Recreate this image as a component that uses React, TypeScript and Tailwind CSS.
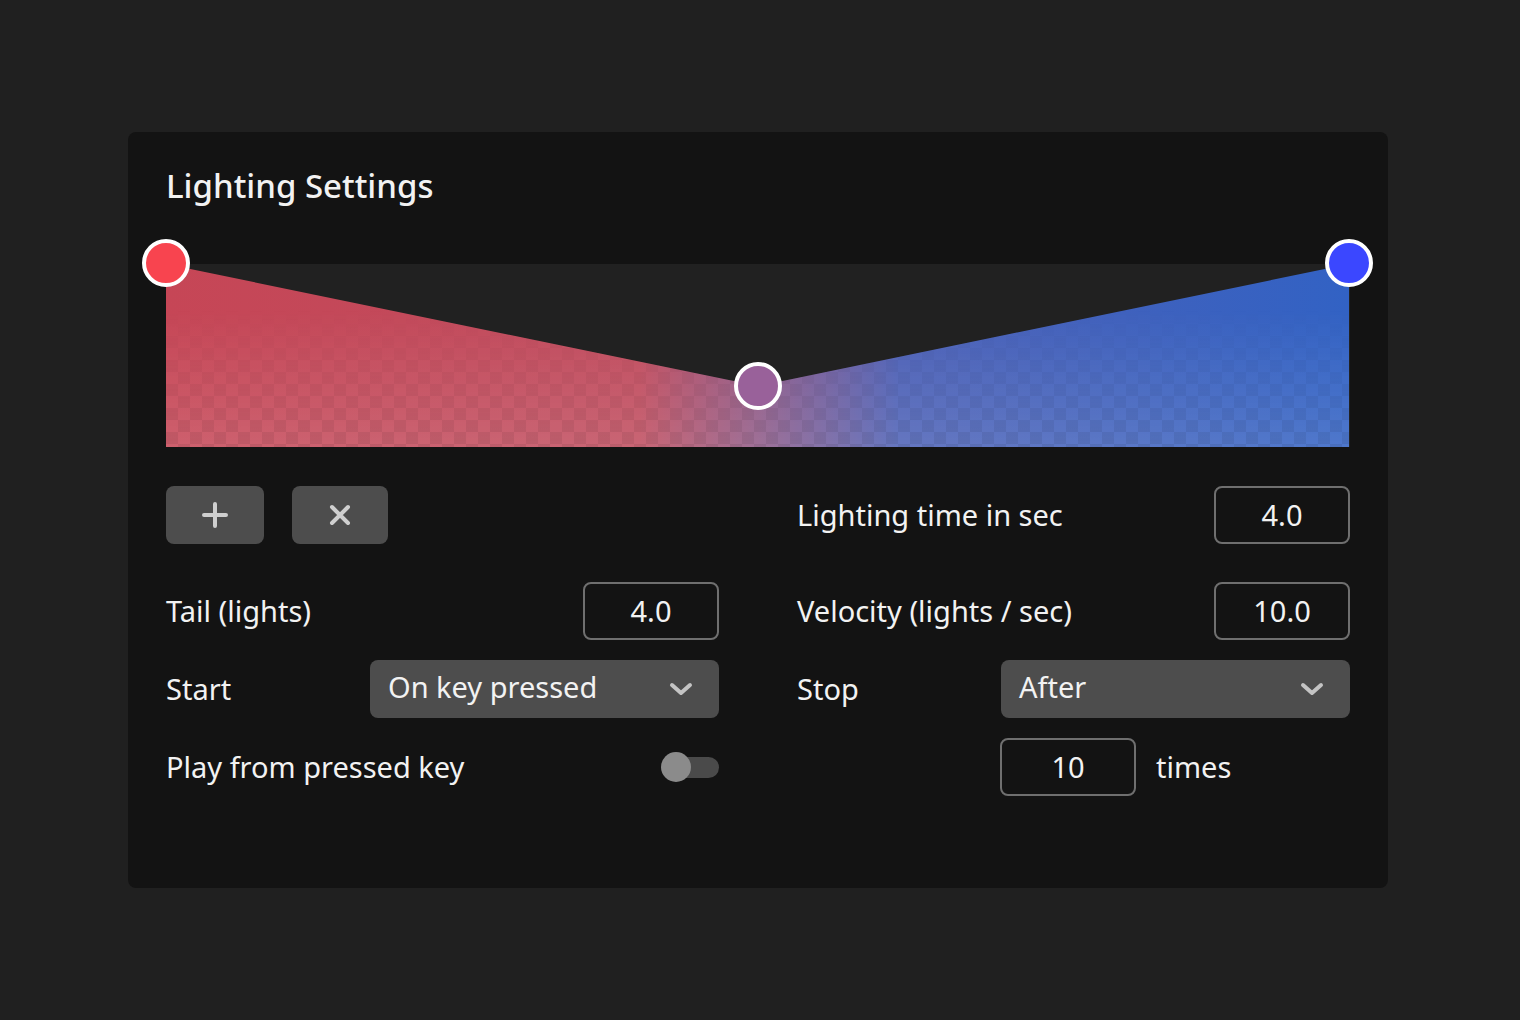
import React from 'react'

const font = { fontFamily: '"Noto Sans", "Open Sans", sans-serif' }

function Chevron() {
  return (
    <svg width="24" height="16" viewBox="0 0 24 16" fill="none">
      <path d="M3 4l9 8 9-8" stroke="#c4c4c4" strokeWidth="4" strokeLinecap="round" strokeLinejoin="round" />
    </svg>
  )
}

function NumberBox({ value }: { value: string }) {
  return (
    <div className="w-[136px] h-[58px] border-2 border-[#6f6f6f] rounded-[8px] flex items-center justify-center text-[29px] text-[#f2f2f2]">
      {value}
    </div>
  )
}

function Select({ value }: { value: string }) {
  return (
    <div className="w-[349px] h-[58px] bg-[#4d4d4d] rounded-[8px] flex items-center justify-between pl-[18px] pr-[26px] text-[29px] text-[#f2f2f2]">
      <span className="-mt-[4px]">{value}</span>
      <Chevron />
    </div>
  )
}

function Graph() {
  const w = 1183
  const h = 183
  return (
    <div className="relative h-[183px] bg-[#212121]">
      <svg width={w} height={h} viewBox={`0 0 ${w} ${h}`} className="block">
        <defs>
          <linearGradient id="hue" x1="0" y1="0" x2="1" y2="0">
            <stop offset="0%" stopColor="#c64656" />
            <stop offset="40%" stopColor="#c04c5e" />
            <stop offset="50%" stopColor="#8f5986" />
            <stop offset="62%" stopColor="#4c60b6" />
            <stop offset="100%" stopColor="#3262c4" />
          </linearGradient>
          <linearGradient id="fade" x1="0" y1="0" x2="0" y2="1">
            <stop offset="25%" stopColor="#000" />
            <stop offset="100%" stopColor="#fff" />
          </linearGradient>
          <pattern id="checker" width="24" height="24" patternUnits="userSpaceOnUse">
            <rect width="24" height="24" fill="#ffffff" fillOpacity="0.14" />
            <rect width="12" height="12" fill="#000000" fillOpacity="0.07" />
            <rect x="12" y="12" width="12" height="12" fill="#000000" fillOpacity="0.07" />
          </pattern>
          <mask id="fademask">
            <rect width={w} height={h} fill="url(#fade)" />
          </mask>
        </defs>
        <polygon points={`0,0 592,122 ${w},0 ${w},${h} 0,${h}`} fill="url(#hue)" />
        <polygon points={`0,0 592,122 ${w},0 ${w},${h} 0,${h}`} fill="url(#checker)" mask="url(#fademask)" />
      </svg>
      <div className="absolute left-[-24px] top-[-25px] w-[48px] h-[48px] rounded-full bg-[#f8444f] border-[4px] border-white" />
      <div className="absolute left-[568px] top-[98px] w-[48px] h-[48px] rounded-full bg-[#99619a] border-[4px] border-white" />
      <div className="absolute left-[1159px] top-[-25px] w-[48px] h-[48px] rounded-full bg-[#3b47ff] border-[4px] border-white" />
    </div>
  )
}

export default function App() {
  return (
    <div className="min-h-screen bg-[#202020] pt-[132px] px-[128px]" style={font}>
      <div className="w-[1260px] h-[756px] bg-[#131313] rounded-[8px] px-[38px] pt-[30px] text-[#f2f2f2]">
        <h1 className="text-[33px] leading-[48px] font-medium mb-[54px]">Lighting Settings</h1>
        <Graph />
        <div className="grid grid-cols-2 gap-x-[78px] mt-[39px]">
          <div className="flex flex-col">
            <div className="flex gap-[28px] h-[58px]">
              <button className="w-[98px] h-[58px] bg-[#4d4d4d] rounded-[8px] flex items-center justify-center">
                <svg width="26" height="26" viewBox="0 0 26 26" fill="none">
                  <path d="M13 2v22M2 13h22" stroke="#cfcfcf" strokeWidth="4" strokeLinecap="round" />
                </svg>
              </button>
              <button className="w-[96px] h-[58px] bg-[#4d4d4d] rounded-[8px] flex items-center justify-center">
                <svg width="22" height="22" viewBox="0 0 22 22" fill="none">
                  <path d="M3 3l16 16M19 3L3 19" stroke="#cfcfcf" strokeWidth="4" strokeLinecap="round" />
                </svg>
              </button>
            </div>
            <div className="flex items-center justify-between h-[58px] mt-[38px]">
              <span className="text-[29px]">Tail (lights)</span>
              <NumberBox value="4.0" />
            </div>
            <div className="flex items-center justify-between h-[58px] mt-[20px]">
              <span className="text-[29px]">Start</span>
              <Select value="On key pressed" />
            </div>
            <div className="flex items-center justify-between h-[58px] mt-[20px]">
              <span className="text-[29px]">Play from pressed key</span>
              <div className="relative w-[58px] h-[30px] flex items-center">
                <div className="w-[58px] h-[21px] ml-[1px] rounded-full bg-[#4a4a4a]" />
                <div className="absolute left-0 top-0 w-[30px] h-[30px] rounded-full bg-[#8b8b8b]" />
              </div>
            </div>
          </div>
          <div className="flex flex-col">
            <div className="flex items-center justify-between h-[58px]">
              <span className="text-[29px]">Lighting time in sec</span>
              <NumberBox value="4.0" />
            </div>
            <div className="flex items-center justify-between h-[58px] mt-[38px]">
              <span className="text-[29px]">Velocity (lights / sec)</span>
              <NumberBox value="10.0" />
            </div>
            <div className="flex items-center justify-between h-[58px] mt-[20px]">
              <span className="text-[29px]">Stop</span>
              <Select value="After" />
            </div>
            <div className="flex items-center h-[58px] mt-[20px] pl-[203px] gap-[20px]">
              <NumberBox value="10" />
              <span className="text-[29px]">times</span>
            </div>
          </div>
        </div>
      </div>
    </div>
  )
}
